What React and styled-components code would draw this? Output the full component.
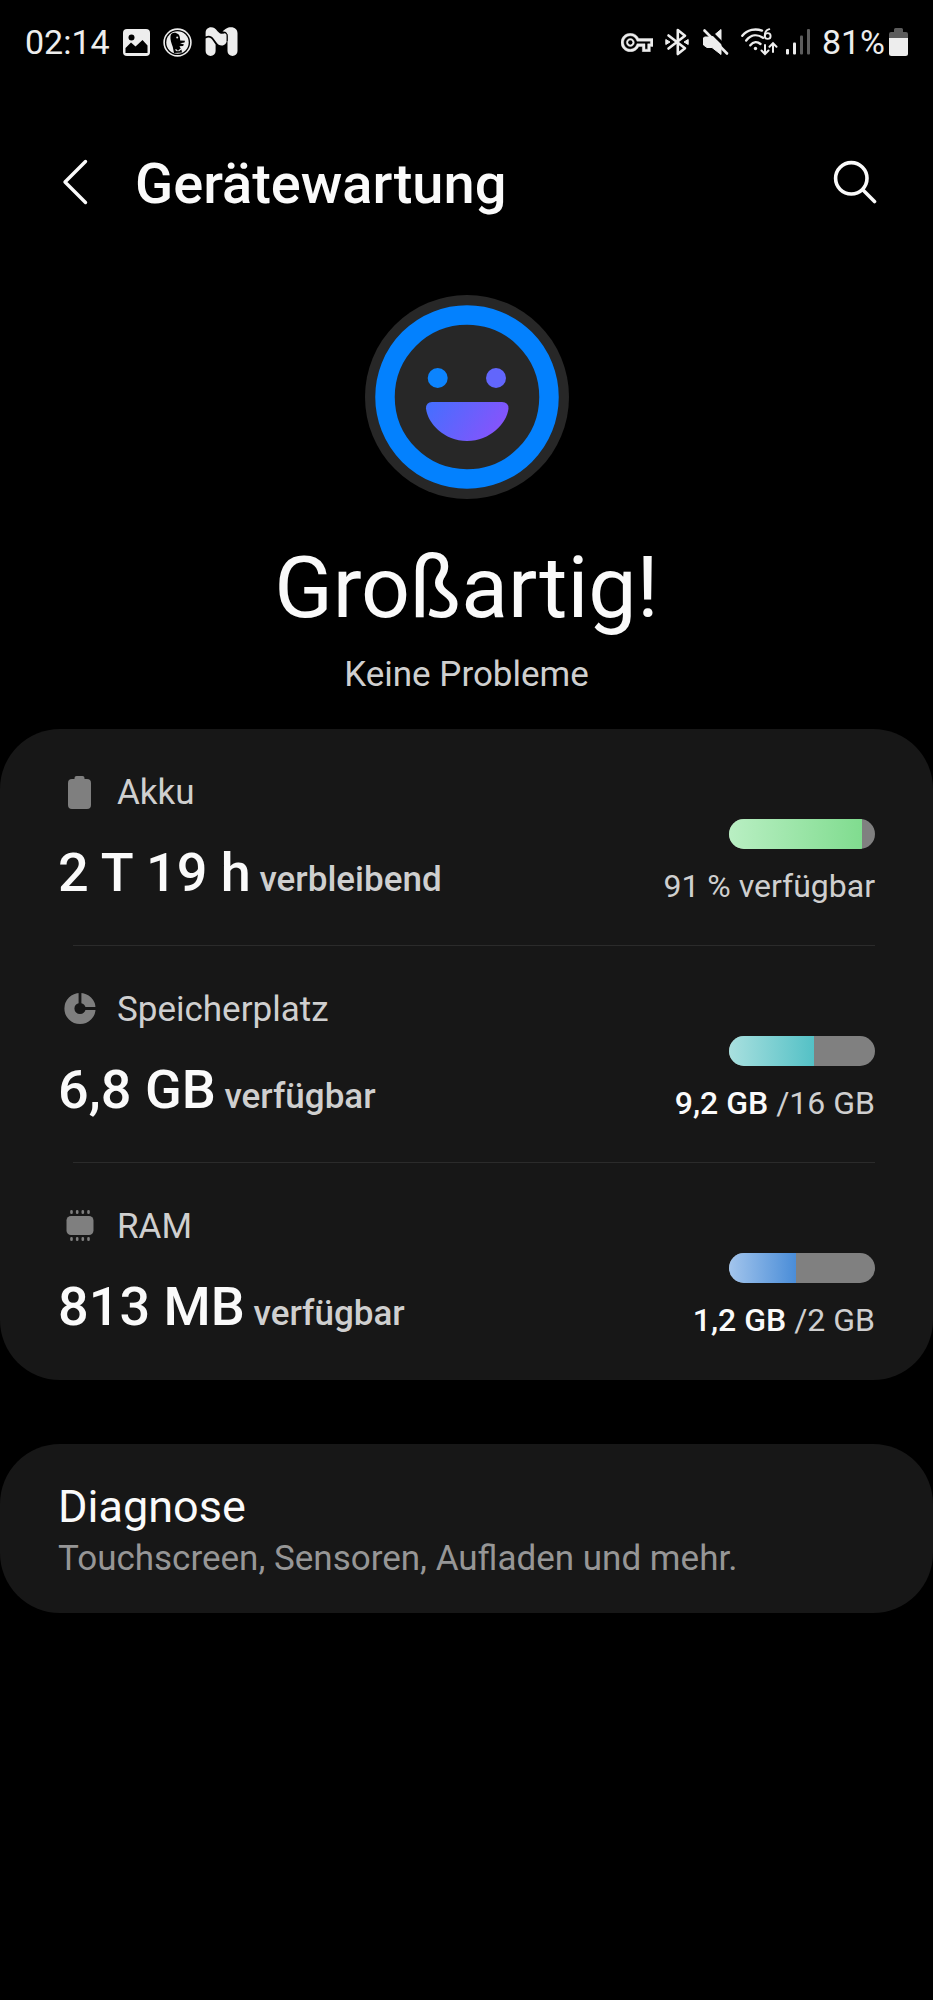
import React from "react";
import styled, { createGlobalStyle } from "styled-components";

const GlobalStyle = createGlobalStyle`
  *, *::before, *::after { box-sizing: border-box; }
  html, body { margin: 0; background: #000; }
  body { font-family: Roboto, "Liberation Sans", sans-serif; color: #fafafa; }
  h1, h2, p { margin: 0; font-weight: 400; }
  button, a { font: inherit; color: inherit; }
`;

const Screen = styled.div`
  min-height: 100vh;
  background: #000;
`;

const StatusBar = styled.div`
  display: flex;
  align-items: center;
  justify-content: space-between;
  height: 84px;
  padding: 0 25px;
  font-size: 34px;
  line-height: 40px;
  color: #ededed;
`;

const StatusGroup = styled.div`
  display: flex;
  align-items: center;
  gap: ${(p) => p.$gap}px;
`;

const Icon = styled.svg`
  display: block;
  flex: none;
`;

const Header = styled.header`
  display: flex;
  align-items: center;
  height: 88px;
  margin-top: 54px;
  padding: 0 48px 0 55px;
`;

const IconButton = styled.button`
  display: grid;
  place-items: center;
  width: 60px;
  height: 60px;
  padding: 0;
  border: 0;
  background: none;
  cursor: pointer;
`;

const BackButton = styled(IconButton)`
  width: 40px;
`;

const Title = styled.h1`
  flex: 1;
  margin-left: 40px;
  padding-top: 4px;
  font-size: 56px;
  line-height: 72px;
  font-weight: 500;
`;

const Hero = styled.section`
  display: flex;
  flex-direction: column;
  align-items: center;
  padding: 69px 24px 32px;
`;

const Verdict = styled.h2`
  margin-top: 37px;
  font-size: 86px;
  line-height: 104px;
`;

const VerdictNote = styled.p`
  margin-top: 13px;
  font-size: 35px;
  line-height: 44px;
  color: #cfcfcf;
`;

const Card = styled.section`
  border-radius: 60px;
  background: #171717;
`;

const Row = styled.a`
  display: flex;
  align-items: flex-start;
  justify-content: space-between;
  height: 217px;
  padding: 42px 58px 0;
  text-decoration: none;
`;

const Divider = styled.hr`
  height: 1px;
  margin: -1px 58px 0 73px;
  border: 0;
  background: #2b2b2b;
`;

const Label = styled.div`
  display: flex;
  align-items: center;
  gap: 16px;
  font-size: 35px;
  line-height: 44px;
  color: #cfcfcf;
`;

const Amount = styled.div`
  margin-top: 24px;
  font-size: 54px;
  line-height: 68px;
  font-weight: 500;
  white-space: pre;
`;

const Unit = styled.span`
  font-size: 35px;
  color: #cfcfcf;
`;

const Usage = styled.div`
  display: flex;
  flex-direction: column;
  align-items: flex-end;
  gap: 17px;
  padding-top: 48px;
`;

const Meter = styled.div`
  width: 146px;
  height: 30px;
  border-radius: 15px;
  background: #808080;
  overflow: hidden;
`;

const MeterFill = styled.div`
  height: 100%;
  background: linear-gradient(to right, ${(p) => p.$from}, ${(p) => p.$to});
`;

const UsageText = styled.div`
  font-size: 32px;
  line-height: 40px;
  color: #cfcfcf;
`;

const Used = styled.span`
  font-weight: 500;
  color: #fafafa;
`;

const LinkCard = styled.a`
  display: block;
  margin-top: 64px;
  padding: 35px 58px 32px;
  border-radius: 60px;
  background: #171717;
  text-decoration: none;
`;

const LinkTitle = styled.div`
  font-size: 45px;
  line-height: 56px;
`;

const LinkNote = styled.div`
  margin-top: 2px;
  font-size: 35px;
  line-height: 44px;
  color: #969696;
`;

const PictureIcon = () => (
  <Icon width="27" height="27" viewBox="0 0 27 27">
    <rect width="27" height="27" rx="4" fill="#ededed" />
    <circle cx="8.5" cy="8.5" r="3" fill="#000" />
    <path d="M2.5 19 8 13.5l4.5 4 7-6.5 5 5.5V24h-22z" fill="#000" />
  </Icon>
);

const DuckIcon = () => (
  <Icon width="29" height="29" viewBox="0 0 29 29">
    <circle cx="14.5" cy="14.5" r="13.4" fill="none" stroke="#ededed" strokeWidth="1.6" />
    <circle cx="14.5" cy="14.5" r="11.2" fill="#ededed" />
    <path d="M7.5 8C8 5 11 4 13.5 5.200C16.500 6 17 8.500 17.200 12.500L22 12.800 21.500 14.500 17 15.200 21 16.500 20 18 16.500 18.200 18.500 22 19 24.500 11 25 9.800 19C8.500 15 7 12 7.500 8z" fill="#000" />
    <circle cx="14.200" cy="9.500" r="1" fill="#ededed" />
    <path d="M12.500 21.500l2 1.500M15.500 23l2.500-2" stroke="#ededed" strokeWidth="1.200" />
  </Icon>
);

const MonogramIcon = () => (
  <Icon width="33" height="30" viewBox="0 0 33 30">
    <path d="M.6 11.500C3.500 9.500 6 10.500 7.500 13L10.600 17.500V24a5 5 0 0 1-10 0z" fill="#ededed" />
    <path d="M.6 9.500V6C.6 2.500 3 .3 6 .3c3 0 4.500 1.400 6.500 3.900 2.200 2.500 4.500 3.300 7.500 1.800 1.300 0 1.800 1 1.800 2.500V13c0 3-2 5.500-5 5.500-2.500 0-4-1-5.300-3L8.500 11.500C6.500 8.500 3.500 8 .6 9.500z" fill="#ededed" />
    <path d="M17.500 4.500C20.500 2 22 .3 26 .3c4 0 6.500 2.500 6.500 6V24a5 5 0 0 1-10 0V8.500c0-2.500-1.500-4.500-5-4z" fill="#ededed" />
    <path d="M18 5.800c2.800-.6 4.200.7 4.200 3V14" fill="none" stroke="#000" strokeWidth="1" />
  </Icon>
);

const KeyIcon = () => (
  <Icon width="32" height="19" viewBox="0 5 24 14" fill="#ededed">
    <path d="M22 19h-6v-4h-2.680c-1.140 2.420-3.600 4-6.320 4-3.860 0-7-3.140-7-7s3.140-7 7-7c2.720 0 5.170 1.580 6.320 4H24v6h-2v4zm-4-2h2v-4h2v-2H11.940l-.23-.67C11.010 8.340 9.110 7 7 7c-2.760 0-5 2.240-5 5s2.240 5 5 5c2.110 0 4.010-1.340 4.710-3.330l.23-.67H18v4zM7 15c-1.650 0-3-1.350-3-3s1.350-3 3-3 3 1.350 3 3-1.350 3-3 3z" stroke="#ededed" strokeWidth=".3" />
    <circle cx="7" cy="12" r="1.600" fill="#000" />
  </Icon>
);

const BluetoothIcon = () => (
  <Icon width="24" height="28" viewBox="0 0 24 28">
    <path d="M3.500 7.500 20 20.300 12.800 26V2L20 7.700 3.500 20.500" fill="none" stroke="#ededed" strokeWidth="2.600" strokeLinejoin="round" strokeLinecap="round" />
    <path d="M.8 11.500 5 14 .8 16.500zM23.200 11.500 19 14l4.200 2.500z" fill="#ededed" stroke="#ededed" strokeLinejoin="round" />
  </Icon>
);

const MuteIcon = () => (
  <Icon width="28" height="28" viewBox="0 0 28 28">
    <path d="M3.500 9h7.500L20 1.500v25L11 19.500H6L2.500 17v-7z" fill="#ededed" stroke="#ededed" strokeLinejoin="round" />
    <path d="M5.500-.5 29.500 23.500" stroke="#000" strokeWidth="3" />
    <path d="M3.500 2.500 26 25.500" stroke="#ededed" strokeWidth="2.600" strokeLinecap="round" />
  </Icon>
);

const WifiIcon = () => (
  <Icon width="37" height="28" viewBox="0 0 37 28">
    <g fill="none" stroke="#ededed" strokeWidth="2.400" strokeLinecap="round">
      <path d="M1.300 7.800C6.500 1.300 14.500.3 21 2.600" />
      <path d="M5.200 12.500C10 6.500 16.500 6 22 9.800" />
      <path d="M9.300 17.200C12.500 13.300 16.500 13.300 19.500 16" />
      <path d="M24 17v8.500M20.500 22.500 24 26l3.500-3.500M32 24v-8.500M28.500 18.700 32 15.200l3.500 3.500" strokeWidth="2" />
      <circle cx="26.700" cy="8" r="2.900" strokeWidth="1.900" />
      <path d="M28.300 1.200C25 2.200 23.600 4.500 23.800 8" strokeWidth="1.900" />
    </g>
    <circle cx="14.500" cy="20.500" r="1.700" fill="#ededed" />
  </Icon>
);

const SignalIcon = () => (
  <Icon width="24" height="26" viewBox="0 0 24 26">
    <rect x="0" y="20" width="3" height="5.500" rx="1" fill="#ededed" />
    <rect x="7" y="13.500" width="3" height="12" rx="1" fill="#ededed" />
    <rect x="14" y="6.500" width="3" height="19" rx="1" fill="#5c5c5c" />
    <rect x="21" y="0" width="3" height="25.500" rx="1" fill="#5c5c5c" />
  </Icon>
);

const BatteryIcon = () => (
  <Icon width="19" height="28" viewBox="0 0 19 28">
    <path d="M5 3V1.500Q5 0 6.500 0h6Q14 0 14 1.500V4h3q2 0 2 2v4H0V6q0-2 2-2h3z" fill="#5c5c5c" />
    <path d="M0 10h19v15.500q0 2.500-2.500 2.500h-14Q0 28 0 25.500z" fill="#ededed" />
  </Icon>
);

const BackIcon = () => (
  <Icon width="26" height="46" viewBox="0 0 26 46">
    <path d="M23.500 2.500 3 23l20.500 20.500" fill="none" stroke="#fafafa" strokeWidth="3.400" strokeLinecap="round" strokeLinejoin="round" />
  </Icon>
);

const SearchIcon = () => (
  <Icon width="44" height="44" viewBox="0 0 44 44">
    <g fill="none" stroke="#fafafa" strokeWidth="3.600" strokeLinecap="round">
      <circle cx="18.300" cy="18.300" r="15.700" />
      <path d="M30.500 30.500 41.500 41.500" />
    </g>
  </Icon>
);

const FaceIcon = () => (
  <Icon width="204" height="204" viewBox="0 0 204 204" role="img" aria-label="Großartig">
    <defs>
      <linearGradient id="mouth" gradientUnits="userSpaceOnUse" x1="62" y1="92" x2="138" y2="140">
        <stop offset="0" stopColor="#3d72ff" />
        <stop offset="1" stopColor="#8a52fb" />
      </linearGradient>
    </defs>
    <circle cx="102" cy="102" r="102" fill="#272727" />
    <circle cx="102" cy="102" r="82" fill="none" stroke="#0381fe" strokeWidth="19.500" />
    <circle cx="72.700" cy="83" r="10" fill="#0c84fe" />
    <circle cx="131" cy="83" r="10" fill="#6266fc" />
    <path d="M67 107h70q6.500 0 6.500 6.500C142 128 125 146 102 146S62.500 128 61 113.500Q61 107 67 107z" fill="url(#mouth)" />
  </Icon>
);

const AkkuIcon = () => (
  <Icon width="43" height="44" viewBox="0 0 43 44">
    <path d="M16.500 8V7q0-2 2-2h6q2 0 2 2v1h2.500q4 0 4 4v22q0 4-4 4H14q-4 0-4-4V12q0-4 4-4z" fill="#7f7f7f" />
  </Icon>
);

const StorageIcon = () => (
  <Icon width="43" height="44" viewBox="0 0 43 44">
    <circle cx="22" cy="20.500" r="10.600" fill="none" stroke="#7f7f7f" strokeWidth="10" />
    <path d="M22 20.500V3M22 20.500H39.500" stroke="#171717" strokeWidth="2.800" />
  </Icon>
);

const RamIcon = () => (
  <Icon width="43" height="44" viewBox="0 0 43 44">
    <rect x="8.500" y="11" width="27" height="19" rx="4.500" fill="#7f7f7f" />
    <path d="M13.500 6.200v1.600M19.200 6.200v1.600M24.800 6.200v1.600M30.500 6.200v1.600M13.500 33.200v1.600M19.200 33.200v1.600M24.800 33.200v1.600M30.500 33.200v1.600" stroke="#7f7f7f" strokeWidth="2.600" strokeLinecap="round" />
  </Icon>
);

const resources = [
  { label: "Akku", icon: AkkuIcon, amount: "2 T 19 h", unit: "verbleibend", rest: "91 % verfügbar", percent: 91, from: "#b9efc3", to: "#80dc8f" },
  { label: "Speicherplatz", icon: StorageIcon, amount: "6,8 GB", unit: "verfügbar", used: "9,2 GB", rest: " /16 GB", percent: 58, from: "#a9e0df", to: "#54c1c6" },
  { label: "RAM", icon: RamIcon, amount: "813 MB", unit: "verfügbar", used: "1,2 GB", rest: " /2 GB", percent: 46, from: "#a3c5ec", to: "#4a8dd8" },
];

const ResourceRow = ({ item }) => {
  const Glyph = item.icon;
  return (
    <Row href="#">
      <div>
        <Label>
          <Glyph />
          {item.label}
        </Label>
        <Amount>
          {item.amount}
          <Unit> {item.unit}</Unit>
        </Amount>
      </div>
      <Usage>
        <Meter>
          <MeterFill $from={item.from} $to={item.to} style={{ width: `${item.percent}%` }} />
        </Meter>
        <UsageText>
          {item.used && <Used>{item.used}</Used>}
          {item.rest}
        </UsageText>
      </Usage>
    </Row>
  );
};

export default function App() {
  return (
    <Screen>
      <GlobalStyle />
      <StatusBar>
        <StatusGroup $gap={13}>
          <span>02:14</span>
          <PictureIcon />
          <DuckIcon />
          <MonogramIcon />
        </StatusGroup>
        <StatusGroup $gap={12}>
          <KeyIcon />
          <BluetoothIcon />
          <MuteIcon />
          <StatusGroup $gap={8}>
            <WifiIcon />
            <SignalIcon />
          </StatusGroup>
          <StatusGroup $gap={4}>
            <span>81%</span>
            <BatteryIcon />
          </StatusGroup>
        </StatusGroup>
      </StatusBar>
      <Header>
        <BackButton aria-label="Zurück">
          <BackIcon />
        </BackButton>
        <Title>Gerätewartung</Title>
        <IconButton aria-label="Suchen">
          <SearchIcon />
        </IconButton>
      </Header>
      <main>
        <Hero>
          <FaceIcon />
          <Verdict>Großartig!</Verdict>
          <VerdictNote>Keine Probleme</VerdictNote>
        </Hero>
        <Card>
          {resources.map((item, i) => (
            <React.Fragment key={item.label}>
              {i > 0 && <Divider />}
              <ResourceRow item={item} />
            </React.Fragment>
          ))}
        </Card>
        <LinkCard href="#">
          <LinkTitle>Diagnose</LinkTitle>
          <LinkNote>Touchscreen, Sensoren, Aufladen und mehr.</LinkNote>
        </LinkCard>
      </main>
    </Screen>
  );
}
